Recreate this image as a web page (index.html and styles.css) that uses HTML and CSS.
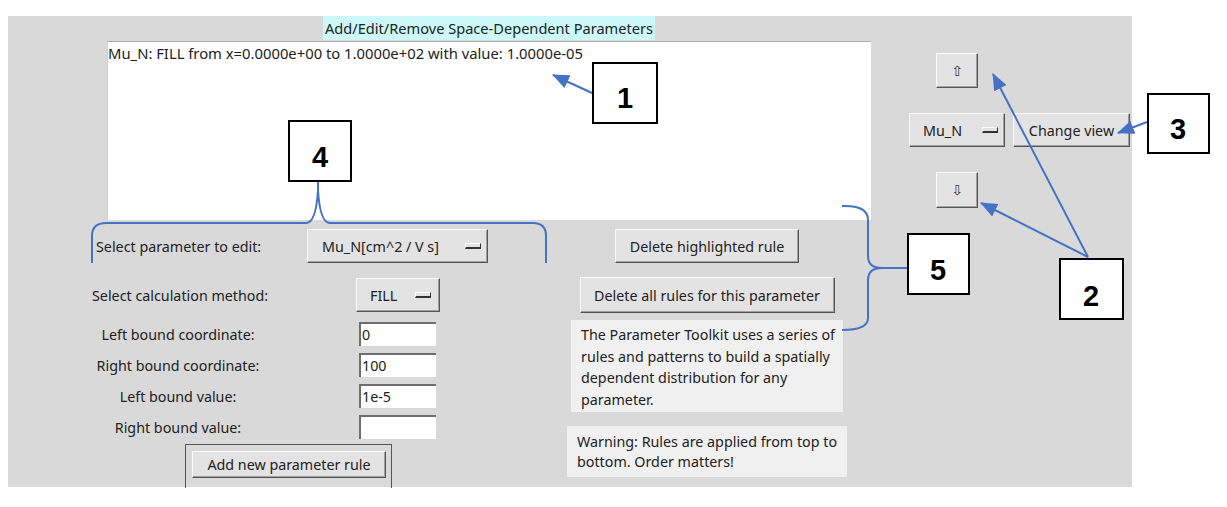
FILE: index.html
```html
<!DOCTYPE html>
<html>
<head>
<meta charset="utf-8">
<link rel="stylesheet" href="styles.css">
</head>
<body>
<div class="app">
  <div class="top">
    <div class="title">Add/Edit/Remove Space-Dependent Parameters</div>
    <div class="rules">Mu_N: FILL from x=0.0000e+00 to 1.0000e+02 with value: 1.0000e-05</div>
    <div class="viewctl">
      <div class="btn arrowbtn">&#8679;</div>
      <div></div>
      <div class="btn menubtn mb-view"><span>Mu_N</span><i class="ind"></i></div>
      <div class="btn changebtn">Change view</div>
      <div class="btn arrowbtn down">&#8681;</div>
    </div>
  </div>
  <div class="bottom">
    <div class="form">
      <div class="row-param">
        <span class="lbl">Select parameter to edit:</span>
        <div class="btn menubtn mb-param"><span>Mu_N[cm^2 / V s]</span><i class="ind"></i></div>
      </div>
      <div class="row-method">
        <span class="lbl">Select calculation method:</span>
        <div class="btn menubtn mb-fill"><span>FILL</span><i class="ind"></i></div>
      </div>
      <div class="entries">
        <span class="elbl">Left bound coordinate:</span><div class="entry">0</div>
        <span class="elbl">Right bound coordinate:</span><div class="entry">100</div>
        <span class="elbl">Left bound value:</span><div class="entry">1e-5</div>
        <span class="elbl">Right bound value:</span><div class="entry"></div>
      </div>
      <div class="addframe"><div class="btn addbtn">Add new parameter rule</div></div>
    </div>
    <div class="actions">
      <div class="btn delone">Delete highlighted rule</div>
      <div class="btn delall">Delete all rules for this parameter</div>
      <div class="info">The Parameter Toolkit uses a series of<br>rules and patterns to build a spatially<br>dependent distribution for any<br>parameter.</div>
      <div class="warn">Warning: Rules are applied from top to<br>bottom. Order matters!</div>
    </div>
  </div>
</div>

<svg class="notes" width="1227" height="507" viewBox="0 0 1227 507">
  <defs>
    <marker id="ah" markerUnits="userSpaceOnUse" markerWidth="18" markerHeight="14" refX="16" refY="7" orient="auto">
      <path d="M0,0 L17,7 L0,14 z" fill="#4472c4"/>
    </marker>
  </defs>
  <g stroke="#4472c4" stroke-width="2" fill="none">
    <line x1="592" y1="93" x2="553" y2="75" marker-end="url(#ah)"/>
    <line x1="1147" y1="122" x2="1118" y2="133" marker-end="url(#ah)"/>
    <line x1="1088" y1="257" x2="993" y2="74" marker-end="url(#ah)"/>
    <line x1="1088" y1="257" x2="981" y2="203" marker-end="url(#ah)"/>
    <path d="M92,263 L92,236 Q92,223 106,223 L306,223 Q316,223 318,190 L318,182 M318,190 Q320,223 330,223 L533,223 Q546,223 546,236 L546,263"/>
    <path d="M842,206 Q868,205 868,220 L868,256 Q868,268 882,268 L907,268 M882,268 Q868,268 868,280 L868,318 Q868,330 842,330"/>
  </g>
  <g fill="#fff" stroke="#000" stroke-width="2">
    <rect x="289" y="121" width="62" height="60"/>
    <rect x="593" y="63" width="64" height="60"/>
    <rect x="1148" y="94" width="61" height="59"/>
    <rect x="908" y="234" width="61" height="60"/>
    <rect x="1060" y="259" width="63" height="60"/>
  </g>
  <g class="num" text-anchor="middle">
    <text x="320" y="167">4</text>
    <text x="625" y="108">1</text>
    <text x="1178" y="139">3</text>
    <text x="938" y="280">5</text>
    <text x="1091" y="306">2</text>
  </g>
</svg>
</body>
</html>
```

FILE: styles.css
```css
html, body {
  margin: 0;
  padding: 0;
  background: #ffffff;
}
body {
  position: relative;
  width: 1227px;
  height: 507px;
  overflow: hidden;
  font-family: "Noto Sans", "Open Sans", sans-serif;
  font-size: 14.3px;
  color: #222;
}
.app {
  width: 1124px;
  height: 471px;
  margin: 16px 0 0 8px;
  background: #d9d9d9;
  display: flex;
  flex-direction: column;
}
.top {
  display: grid;
  grid-template-columns: 764px 221px;
  grid-template-rows: 25px 179px;
  column-gap: 38px;
  padding-left: 99px;
}
.title {
  grid-column: 1;
  grid-row: 1;
  justify-self: center;
  height: 24px;
  line-height: 24px;
  font-size: 14.6px;
  background: #ccf8f8;
  padding: 0 2px;
  white-space: nowrap;
}
.rules {
  grid-column: 1;
  grid-row: 2;
  background: #fff;
  border-top: 1px solid #a8a8a8;
  border-left: 1px solid #cfcfcf;
  box-sizing: border-box;
  padding: 1px 0 0 0;
  font-size: 14.8px;
  line-height: 21px;
  white-space: nowrap;
}
.viewctl {
  grid-column: 2;
  grid-row: 1 / span 2;
  padding-top: 37px;
  display: grid;
  grid-template-columns: 96px 117px;
  grid-template-rows: 35px 34px 36px;
  column-gap: 8px;
  row-gap: 25px;
  align-content: start;
}
.btn {
  box-sizing: border-box;
  background: #e3e3e3;
  border: 1px solid;
  border-color: #fafafa #555 #555 #fafafa;
  box-shadow: inset -1px -1px 0 #a0a0a0;
  display: flex;
  align-items: center;
  justify-content: center;
  white-space: nowrap;
}
.arrowbtn {
  width: 42px;
  justify-self: center;
  font-family: "DejaVu Sans", sans-serif;
  font-size: 14px;
  color: #333;
}
.down {
  grid-column: 1;
}
.menubtn {
  justify-content: space-between;
}
.ind {
  display: block;
  width: 14px;
  height: 3px;
  background: #e3e3e3;
  border: 1px solid;
  border-color: #fff #333 #333 #fff;
  border-bottom-width: 2px;
}
.mb-view {
  padding: 0 6px 0 13px;
}
.changebtn {
  padding: 0 4px;
}
.bottom {
  display: grid;
  grid-template-columns: 559px 280px;
}
.form {
  padding-top: 9px;
  display: flex;
  flex-direction: column;
}
.row-param {
  display: grid;
  grid-template-columns: 211px 181px;
  height: 34px;
  padding-left: 88px;
  align-items: center;
}
.mb-param {
  height: 34px;
  padding: 0 6px 0 14px;
}
.row-method {
  display: grid;
  grid-template-columns: 264px 84px;
  height: 34px;
  margin-top: 15px;
  padding-left: 84px;
  align-items: center;
}
.mb-fill {
  height: 34px;
  padding: 0 8px 0 13px;
}
.entries {
  display: grid;
  grid-template-columns: 172px 77px;
  grid-auto-rows: 24px;
  column-gap: 95px;
  row-gap: 7px;
  margin-top: 10px;
  padding-left: 84px;
  align-items: center;
}
.elbl {
  text-align: center;
  white-space: nowrap;
}
.entry {
  height: 24px;
  box-sizing: border-box;
  background: #fff;
  border-top: 2px solid #6e6e6e;
  border-left: 2px solid #6e6e6e;
  padding-left: 1px;
  line-height: 21px;
}
.addframe {
  margin-top: 5px;
  margin-left: 177px;
  width: 207px;
  height: 44px;
  box-sizing: border-box;
  border: 1px solid #555;
  border-bottom: none;
  padding: 6px 5px 0 6px;
}
.addbtn {
  height: 27px;
}
.actions {
  padding-top: 9px;
  display: flex;
  flex-direction: column;
  align-items: center;
}
.delone {
  width: 184px;
  height: 34px;
}
.delall {
  width: 255px;
  height: 36px;
  margin-top: 14px;
}
.info {
  width: 272px;
  height: 92px;
  margin-top: 7px;
  box-sizing: border-box;
  background: #f0f0f0;
  padding: 4px 0 0 10px;
  line-height: 21.7px;
  white-space: nowrap;
}
.warn {
  width: 280px;
  height: 51px;
  margin-top: 14px;
  box-sizing: border-box;
  background: #f0f0f0;
  padding: 6px 0 0 10px;
  line-height: 20px;
  white-space: nowrap;
}
.notes {
  position: absolute;
  left: 0;
  top: 0;
  pointer-events: none;
}
.num {
  font-family: "Liberation Sans", Arial, sans-serif;
  font-weight: bold;
  font-size: 29px;
  fill: #000;
}
```
